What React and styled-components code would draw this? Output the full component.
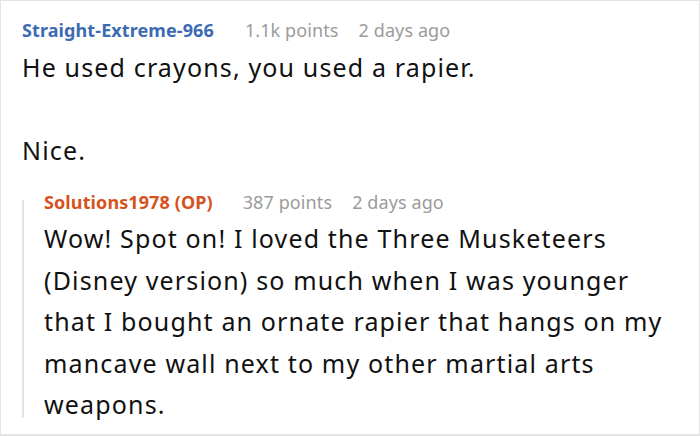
import React from 'react';
import styled, { createGlobalStyle } from 'styled-components';

const GlobalStyle = createGlobalStyle`
  html, body {
    margin: 0;
    padding: 0;
    background: #fff;
  }
  body {
    font-family: "Noto Sans", "Open Sans", sans-serif;
  }
`;

const Card = styled.div`
  box-sizing: border-box;
  width: 700px;
  height: 436px;
  border: 1px solid #e4e4e4;
  border-bottom-width: 2px;
  padding: 17px 20px 0 21px;
  overflow: hidden;
  background: #fff;
`;

const Comment = styled.div`
  display: flex;
  flex-direction: column;
`;

const Header = styled.div`
  display: flex;
  align-items: baseline;
  font-size: 18px;
  line-height: 24px;
  letter-spacing: 0.1px;
`;

const Author = styled.span`
  font-weight: 700;
  color: ${({ $op }) => ($op ? '#d6521d' : '#3c6bb4')};
  margin-right: ${({ $op }) => ($op ? '30px' : '31px')};
`;

const Meta = styled.span`
  color: #9b9b9b;
  margin-right: 20px;
`;

const Body = styled.div`
  margin-top: 4.5px;
  font-size: 25px;
  line-height: 41.5px;
  letter-spacing: 1.15px;
  color: #111;

  p {
    margin: 0;
  }
  p + p {
    margin-top: 41.5px;
  }
`;

const Reply = styled.div`
  position: relative;
  margin-top: 18.5px;
  padding-left: 22px;

  &::before {
    content: '';
    position: absolute;
    left: 0;
    top: 10px;
    bottom: 8px;
    width: 2px;
    background: #e4e4e4;
  }
`;

const CommentHeader = ({ author, points, time, op }) => (
  <Header>
    <Author $op={op}>{author}</Author>
    <Meta>{points}</Meta>
    <Meta>{time}</Meta>
  </Header>
);

const App = () => (
  <>
    <GlobalStyle />
    <Card>
      <Comment>
        <CommentHeader author="Straight-Extreme-966" points="1.1k points" time="2 days ago" />
        <Body>
          <p>He used crayons, you used a rapier.</p>
          <p>Nice.</p>
        </Body>
      </Comment>
      <Reply>
        <CommentHeader author="Solutions1978 (OP)" points="387 points" time="2 days ago" op />
        <Body>
          Wow! Spot on! I loved the Three Musketeers (Disney version) so much when I was younger
          that I bought an ornate rapier that hangs on my mancave wall next to my other martial
          arts weapons.
        </Body>
      </Reply>
    </Card>
  </>
);

export default App;
